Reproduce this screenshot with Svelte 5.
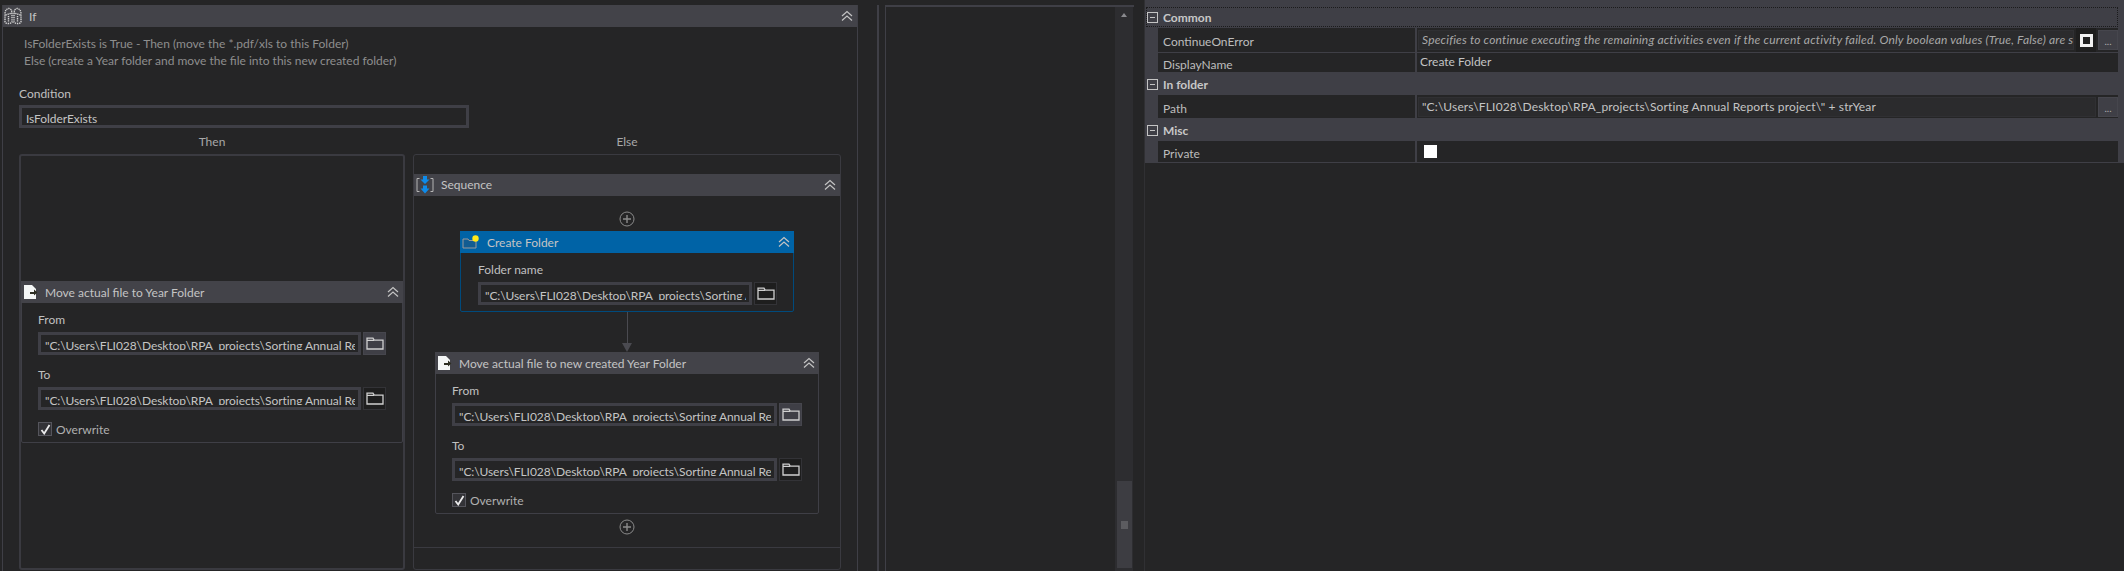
<script lang="ts">
  const path = '"C:\\Users\\FLI028\\Desktop\\RPA_projects\\Sorting Annual Reports project\\" + strYear';
  const hint = 'Specifies to continue executing the remaining activities even if the current activity failed. Only boolean values (True, False) are supported.';
</script>

{#snippet chevrons()}
  <svg class="chev" width="14" height="12" viewBox="0 0 14 12" fill="none" stroke="#c4c4c4" stroke-width="1.2">
    <path d="M2 6 7 1.500 12 6M2 10.500 7 6 12 10.500" />
  </svg>
{/snippet}

{#snippet folderBtn(hot)}
  <div class="browse" class:hot>
    <svg width="18" height="13" viewBox="0 0 18 13" fill="none" stroke="#d0d0d0" stroke-width="1.3">
      <path d="M1 12V1.200h6l1.200 2H17V12ZM1 3.400h7" />
    </svg>
  </div>
{/snippet}

{#snippet pathField(text, hot)}
  <div class="field-row">
    <div class="input"><span class="clip">{text}</span></div>
    {@render folderBtn(hot)}
  </div>
{/snippet}

{#snippet moveIcon()}
  <svg class="acticon" width="15" height="16" viewBox="0 0 15 16">
    <path d="M1 1h8l4 4v10H1Z" fill="#f4f6f6" />
    <path d="M7 8h4V5.600l3.400 3-3.400 3V10H7Z" fill="#2d2d22" />
  </svg>
{/snippet}

{#snippet moveCard(title)}
  <section class="card">
    <header class="bar">
      {@render moveIcon()}
      <span class="title">{title}</span>
      {@render chevrons()}
    </header>
    <div class="card-body">
      <div class="label">From</div>
      {@render pathField(path, true)}
      <div class="label to">To</div>
      {@render pathField(path, false)}
      <div class="overwrite">
        <span class="check">
          <svg width="11" height="11" viewBox="0 0 11 11" fill="none" stroke="#ececec" stroke-width="1.8"><path d="M1.500 6 4.200 9.500 9.500 1" /></svg>
        </span>
        <span class="text">Overwrite</span>
      </div>
    </div>
  </section>
{/snippet}

{#snippet plus()}
  <svg class="plus" width="16" height="16" viewBox="0 0 16 16" fill="none" stroke="#8a8a8a" stroke-width="1">
    <circle cx="8" cy="8" r="7" /><path d="M4 8h8M8 4v8" stroke-width="1.400" />
  </svg>
{/snippet}

{#snippet minus()}
  <span class="minus"></span>
{/snippet}

<div class="app">
  <div class="designer">
    <section class="if">
      <header class="bar if-bar">
        <svg class="if-icon" width="18" height="18" viewBox="0 0 18 18" fill="none" stroke="#d4d4d4" stroke-width="1.400" stroke-dasharray="1.300 0.800">
          <path d="M1 15V7c0-3.500 1.800-5.500 3.800-5.500S8 3.500 8 7v8c0 1-2 1.500-3.500 1.500S1 16 1 15Z" />
          <path d="M17 15V7c0-3.500-1.800-5.500-3.800-5.500S10 3.500 10 7v8c0 1 2 1.500 3.500 1.500S17 16 17 15Z" />
          <path d="M1.500 8 8 6M16.500 8 10 6M4.500 9v6M13.500 9v6" />
        </svg>
        <span class="title">If</span>
        <span class="if-chev">{@render chevrons()}</span>
      </header>
      <div class="if-body">
        <p class="desc">IsFolderExists is True - Then (move the *.pdf/xls to this Folder)<br />Else (create a Year folder and move the file into this new created folder)</p>
        <div class="label cond">Condition</div>
        <div class="input cond-input"><span class="clip">IsFolderExists</span></div>
        <div class="branches">
          <div class="branch">
            <div class="branch-name">Then</div>
            <div class="box then">
              {@render moveCard('Move actual file to Year Folder')}
            </div>
          </div>
          <div class="branch">
            <div class="branch-name">Else</div>
            <div class="box else">
              <section class="seq">
                <header class="bar">
                  <svg class="acticon" width="18" height="18" viewBox="0 0 18 18">
                    <path d="M3.500 2.500H1v13h2.500M14.500 2.500H17v13h-2.500" fill="none" stroke="#b5b5b5" stroke-width="1" />
                    <path d="M7 0h4v3.500h2.500L9 8 4.500 3.500H7ZM7 9.500h4V12.500h2.500L9 17.500 4.500 12.500H7Z" fill="#0e8bea" />
                  </svg>
                  <span class="title seq-title">Sequence</span>
                  {@render chevrons()}
                </header>
                <div class="seq-body">
                  {@render plus()}
                  <section class="card selected">
                    <header class="bar blue">
                      <svg class="acticon" width="18" height="16" viewBox="0 0 18 16">
                        <path d="M1 14V5h5l1 1.500h7V14Z" fill="#125c91" stroke="#9a9a9a" stroke-width="1" />
                        <circle cx="13.500" cy="4.500" r="3.200" fill="#ffe81a" />
                      </svg>
                      <span class="title">Create Folder</span>
                      {@render chevrons()}
                    </header>
                    <div class="card-body">
                      <div class="label">Folder name</div>
                      {@render pathField(path, false)}
                    </div>
                  </section>
                  <div class="connector"></div>
                  {@render moveCard('Move actual file to new created Year Folder')}
                  {@render plus()}
                </div>
              </section>
            </div>
          </div>
        </div>
      </div>
    </section>
  </div>

  <div class="split"></div>

  <div class="middle">
    <div class="canvas"></div>
    <div class="scroll">
      <span class="arrow"></span>
      <div class="thumb"><span class="grip"></span></div>
    </div>
  </div>

  <div class="props">
    <div class="grid">
      <div class="cat first">{@render minus()}<b>Common</b></div>
      <div class="row coe">
        <div class="name">ContinueOnError</div>
        <div class="val">
          <div class="box-val hint"><span class="clip">{hint}</span></div>
          <div class="toggle"><span class="square"></span></div>
          <div class="dots">...</div>
        </div>
      </div>
      <div class="row">
        <div class="name">DisplayName</div>
        <div class="val plain">Create Folder</div>
      </div>
      <div class="cat">{@render minus()}<b>In folder</b></div>
      <div class="row tall">
        <div class="name">Path</div>
        <div class="val">
          <div class="box-val"><span class="clip">{path}</span></div>
          <div class="dots">...</div>
        </div>
      </div>
      <div class="cat">{@render minus()}<b>Misc</b></div>
      <div class="row last">
        <div class="name">Private</div>
        <div class="val"><span class="white"></span></div>
      </div>
    </div>
  </div>
</div>

<style>
  :global(body) { margin: 0; background: #252526; }
  .app {
    display: flex; width: 2124px; height: 571px; overflow: hidden;
    background: #252526; color: #bdbdbd;
    font: 12px Lato, "Open Sans", "Liberation Sans", sans-serif;
  }

  /* designer */
  .designer { width: 877px; padding: 5px 0 0 2px; box-sizing: border-box; background: #252526; flex: none; }
  .if { width: 856px; height: 566px; box-sizing: border-box; border-left: 1px solid #3f3f46; border-right: 1px solid #3f3f46; }
  .bar { display: flex; align-items: center; height: 22px; background: #434349; flex: none; }
  .if-icon { margin: 0 0 0 1px; flex: none; }
  .title { flex: 1; color: #c4c4c4; white-space: nowrap; margin-left: 7px; padding-top: 1px; }
  .seq-title { padding: 0 0 1px; }
  .if-chev { display: flex; }
  .chev { margin-right: 3px; flex: none; }
  .acticon { flex: none; margin-left: 2px; }
  .if-body { padding: 0 0 0 16px; }
  .desc { margin: 0; padding: 8px 0 0 5px; height: 48px; line-height: 17px; color: #8e8e8e; box-sizing: border-box; }
  .label { color: #c0c0c0; line-height: 16px; }
  .cond { margin-top: 11px; }
  .input {
    box-sizing: border-box; height: 23px; border: 3px solid #3f3f46; background: #252526;
    padding: 0 3px 0 4px; overflow: hidden; flex: 1; min-width: 0;
  }
  .clip { display: block; height: 15px; line-height: 21px; overflow: hidden; white-space: nowrap; color: #c4c4c4; letter-spacing: -0.06px; }
  .cond-input { width: 450px; margin-top: 3px; flex: none; }
  .branches { display: grid; grid-template-columns: 386px 428px; gap: 8px; margin-top: 5px; }
  .branch-name { text-align: center; line-height: 18px; height: 21px; color: #a8a8a8; }
  .box {
    height: 416px; box-sizing: border-box; border: 2px solid #3a3a40; border-radius: 3px;
    display: flex; flex-direction: column;
  }
  .then { justify-content: center; }
  .else { padding-top: 19px; border-width: 1.500px; }
  .card { border: 1px solid #3f3f46; border-radius: 2px; box-sizing: border-box; }
  .box .card .bar { margin: -1px -1px 0; }
  .card-body { padding: 9px 16px 0 16px; }
  .field-row { display: flex; gap: 2px; margin-top: 4px; height: 23px; }
  .browse {
    width: 23px; height: 23px; box-sizing: border-box; flex: none; background: #1e1e1e;
    border: 1px solid #333337; display: flex; align-items: center; justify-content: center;
  }
  .browse.hot { background: #3f3f46; border-color: #46464d; }
  .to { margin-top: 12px; }
  .overwrite { display: flex; align-items: center; gap: 4px; margin: 11px 0 5px; height: 16px; }
  .check {
    width: 14px; height: 14px; box-sizing: border-box; border: 1px solid #55555c; background: #333337;
    display: flex; align-items: center; justify-content: center;
  }
  .text { color: #b0b0b0; }

  .seq { height: 373px; border-bottom: 1.500px solid #3a3a40; }
  .seq-body { display: flex; flex-direction: column; align-items: center; padding-top: 15px; }
  .plus { flex: none; margin-bottom: 4px; }
  .seq-body .card { width: 384px; }
  .seq-body .card + .plus { margin-top: 5px; margin-bottom: 0; }
  .seq-body .card.selected { width: 334px; border: 1px solid #004a7c; height: 81px; }
  .blue { background: #0063a6; height: 22px; }
  .selected .card-body { padding-left: 17px; }
  .connector { width: 1px; height: 31px; background: #4a4a50; position: relative; margin-bottom: 9px; }
  .connector::after {
    content: ''; position: absolute; left: -5px; bottom: -9px;
    border: 5.500px solid transparent; border-top: 9px solid #4a4a50; border-bottom: 0;
  }

  /* middle panel */
  .split { width: 9px; flex: none; margin-top: 5px; box-sizing: border-box; border-left: 2px solid #3f3f46; border-right: 1px solid #3f3f46; }
  .middle { width: 248px; flex: none; margin-top: 5px; border-top: 2px solid #3f3f46; display: flex; background: #252526; }
  .canvas { width: 229px; flex: none; }
  .scroll { width: 18px; background: #2d2d30; display: flex; flex-direction: column; align-items: center; }
  .arrow { margin-top: 6px; border: 3.500px solid transparent; border-bottom: 4px solid #8a8a8e; border-top: 0; }
  .thumb { margin-top: auto; margin-bottom: 3px; width: 15px; height: 87px; background: #3d3d42; display: flex; align-items: center; justify-content: center; }
  .grip { width: 7px; height: 8px; background: #5c5c60; }

  /* property grid */
  .props { flex: 1; min-width: 0; margin-left: 10px; border-left: 1px solid #303033; }
  .grid { background: #3f3f46; padding: 7px 6px 0 0; height: 163px; box-sizing: border-box; }
  .cat { height: 22px; display: flex; align-items: center; gap: 5px; color: #c8c8c8; padding-left: 2px; box-sizing: border-box; }
  .cat.first { height: 20px; margin-left: 1px; padding-left: 1px; outline: 1px dotted #1b1b1c; outline-offset: -1px; margin-bottom: 1px; }
  .cat b { font-weight: 700; padding-top: 1px; }
  .minus { width: 9px; height: 9px; border: 1px solid #c4c4c4; position: relative; flex: none; }
  .minus::after { content: ''; position: absolute; left: 2px; right: 2px; top: 4px; height: 1px; background: #c4c4c4; }
  .row { display: flex; height: 19px; margin-left: 13px; background: #252526; border-bottom: 1px solid #3f3f46; }
  .row.coe { height: 24px; }
  .row.tall { height: 23px; }
  .row.last { height: 21px; }
  .name { width: 259px; flex: none; padding: 3px 0 0 5px; box-sizing: border-box; display: flex; align-items: center; border-right: 2px solid #3f3f46; color: #bdbdbd; }
  .val { flex: 1; display: flex; align-items: center; min-width: 0; padding-left: 1px; gap: 2px; }
  .val.plain { padding-left: 3px; color: #c4c4c4; align-items: flex-start; line-height: 18px; }
  .box-val { flex: 1; min-width: 0; height: 20px; box-sizing: border-box; background: #2b2b2d; border: 1px solid #303033; padding: 0 0 0 3px; }
  .box-val .clip { height: 18px; line-height: 18px; letter-spacing: 0.15px; }
  .box-val.hint .clip { font-style: italic; color: #a8a8a8; padding-right: 3px; letter-spacing: 0.18px; }
  .toggle { width: 20px; height: 24px; background: #1e1e1e; display: flex; align-items: center; justify-content: center; flex: none; }
  .square { width: 13px; height: 13px; box-sizing: border-box; border: 3px solid #f0f0f0; background: #202020; }
  .dots { width: 20px; height: 20px; flex: none; background: #3f3f46; border: 1px solid #46464d; box-sizing: border-box; color: #b0b0b0; text-align: center; font-size: 10px; line-height: 20px; }
  .white { width: 13px; height: 13px; background: #fff; margin-left: 6px; }
</style>
